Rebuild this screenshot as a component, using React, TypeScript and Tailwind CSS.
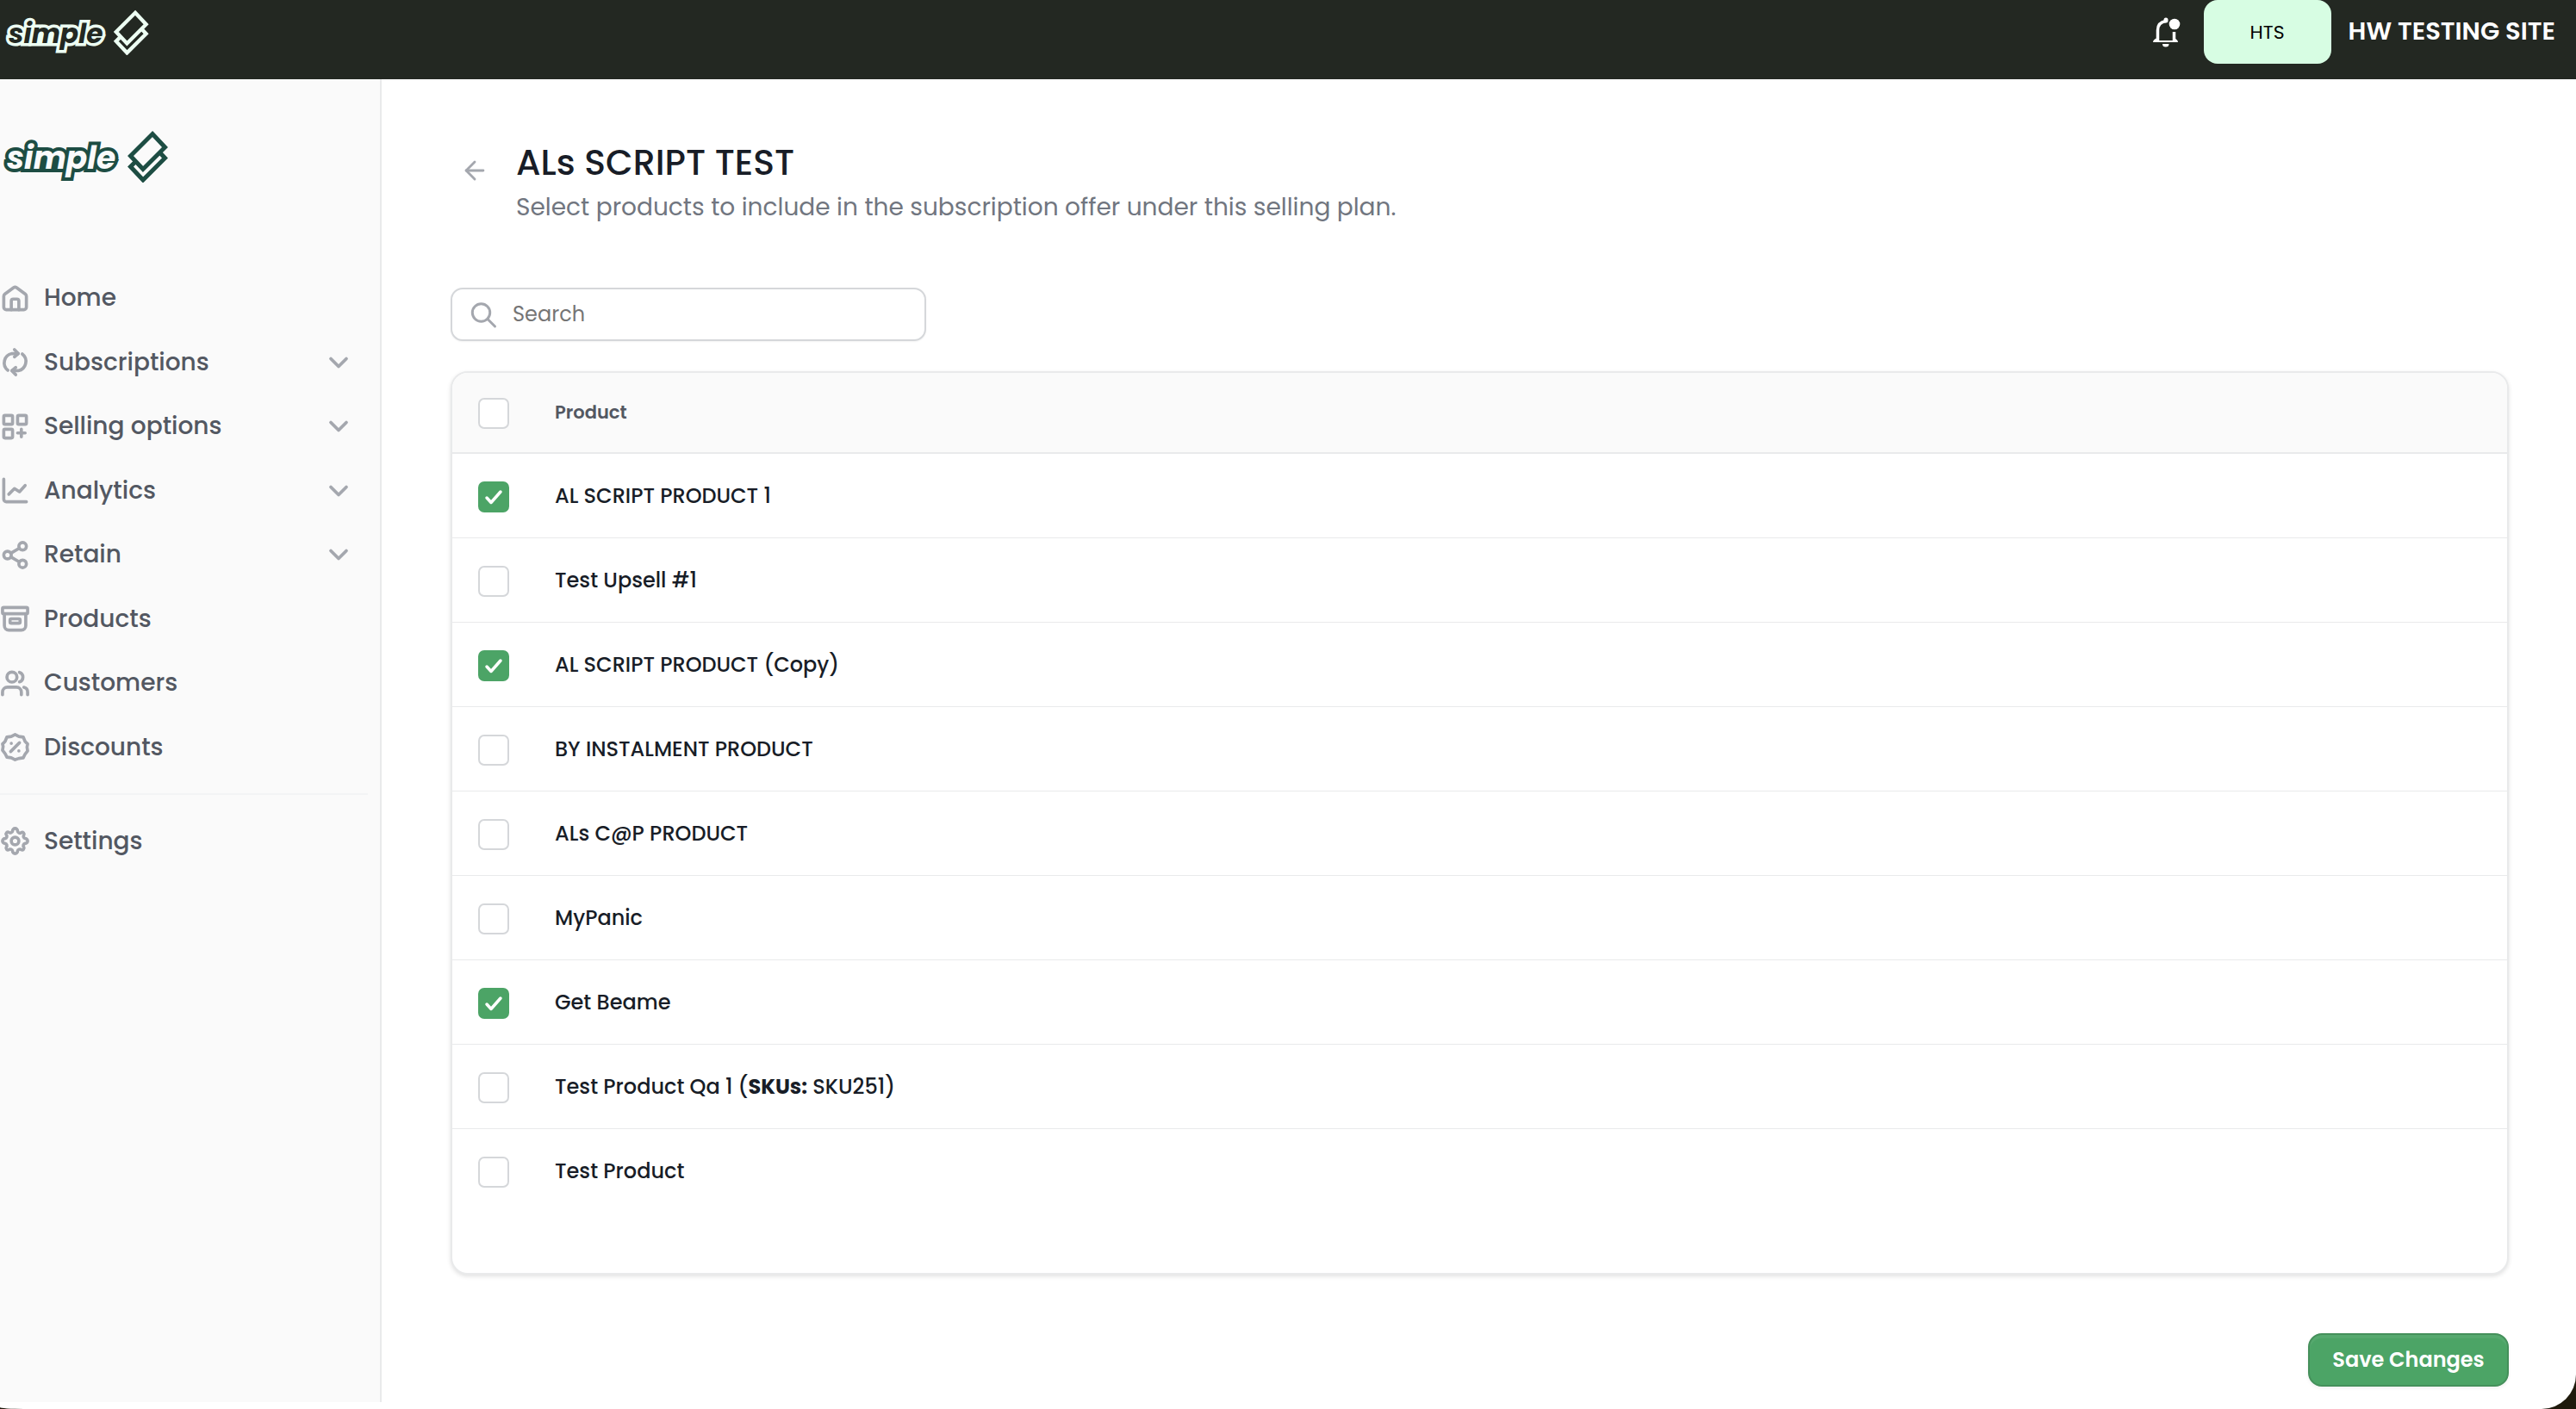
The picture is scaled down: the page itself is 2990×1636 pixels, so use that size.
import { useState } from "react";
import type { ReactNode } from "react";
import { ArrowLeft, ChevronDown } from "lucide-react";

const navItems = [
  {
    label: "Home",
    expandable: false,
    icon: (
      <>
        <path d="M3 10.200a2 2 0 0 1 .800-1.600l7-5.200a2 2 0 0 1 2.400 0l7 5.200a2 2 0 0 1 .800 1.600V19a2 2 0 0 1-2 2H5a2 2 0 0 1-2-2Z" />
        <path d="M9 21v-7a1.500 1.500 0 0 1 1.500-1.500h3A1.500 1.500 0 0 1 15 14v7" />
      </>
    ),
  },
  {
    label: "Subscriptions",
    expandable: true,
    icon: (
      <>
        <path d="M6.300 18.500A7.500 7.500 0 0 1 9.500 5.200h5" />
        <path d="M11.500 2l3 3.200-3 2.600" />
        <path d="M17.700 5.500A7.500 7.500 0 0 1 14.500 18.800h-5" />
        <path d="M12.500 22l-3-3.200 3-2.600" />
      </>
    ),
  },
  {
    label: "Selling options",
    expandable: true,
    icon: (
      <>
        <rect x="3" y="3" width="7" height="7" rx="1" />
        <rect x="14" y="3" width="7" height="7" rx="1" />
        <rect x="3" y="14" width="7" height="7" rx="1" />
        <path d="M17 14v6M14 17h6" />
      </>
    ),
  },
  {
    label: "Analytics",
    expandable: true,
    icon: (
      <>
        <path d="M3 3v16a2 2 0 0 0 2 2h16" />
        <path d="m7 15 4.500-4.500 4 2.500L20 8" />
      </>
    ),
  },
  {
    label: "Retain",
    expandable: true,
    icon: (
      <>
        <circle cx="18" cy="5" r="3" />
        <circle cx="6" cy="12" r="3" />
        <circle cx="18" cy="19" r="3" />
        <path d="m8.600 13.500 6.800 4M15.400 6.500l-6.800 4" />
      </>
    ),
  },
  {
    label: "Products",
    expandable: false,
    icon: (
      <>
        <rect x="2" y="3" width="20" height="5" rx="1" />
        <path d="M3.500 8v9.500A3.500 3.500 0 0 0 7 21h10a3.500 3.500 0 0 0 3.500-3.500V8" />
        <rect x="8" y="12" width="8" height="3.500" rx="1" />
      </>
    ),
  },
  {
    label: "Customers",
    expandable: false,
    icon: (
      <>
        <circle cx="9.500" cy="7" r="4" />
        <path d="M2 21v-2a4 4 0 0 1 4-4h7a4 4 0 0 1 4 4v2" />
        <path d="M15.500 3.200a4 4 0 0 1 0 7.600" />
        <path d="M22 21v-2a4 4 0 0 0-3-3.900" />
      </>
    ),
  },
  {
    label: "Discounts",
    expandable: false,
    icon: (
      <>
        <path d="M12 2l3 1.500 3.500.500 1.500 3.500 2 2-.500 2.500.500 3-2 2.500-1.500 3-3.500.500L12 22l-3-1.500-3.500-.500L4 17 2 14.500l.500-3L2 9.500l2-2L5.500 4 9 3.500Z" />
        <path d="M8.500 15.500l7-7M9 9h.01M15 15h.01" />
      </>
    ),
  },
];

const products = [
  { id: 1, name: "AL SCRIPT PRODUCT 1" },
  { id: 2, name: "Test Upsell #1" },
  { id: 3, name: "AL SCRIPT PRODUCT (Copy)" },
  { id: 4, name: "BY INSTALMENT PRODUCT" },
  { id: 5, name: "ALs C@P PRODUCT" },
  { id: 6, name: "MyPanic" },
  { id: 7, name: "Get Beame" },
  { id: 8, name: "Test Product Qa 1", sku: "SKU251" },
  { id: 9, name: "Test Product" },
];

function Logo({ className, color, fill }: { className: string; color: string; fill: string }) {
  return (
    <svg viewBox="0 0 200 62" className={className} role="img" aria-label="simple">
      <text
        x="8"
        y="46"
        fontSize="36"
        fontWeight="700"
        fontStyle="italic"
        fontFamily="Poppins, sans-serif"
        fill={fill}
        stroke={color}
        strokeWidth="8"
        paintOrder="stroke"
      >
        simple
      </text>
      <g fill={fill} stroke={color} strokeWidth="5">
        <path d="M177 18 191.500 33.500 166 59 151.500 43.500Z" />
        <path d="M177 5.500 191.500 21 166 46.500 151.500 31Z" />
      </g>
    </svg>
  );
}

function NavIcon({ children }: { children: ReactNode }) {
  return (
    <svg
      viewBox="0 0 24 24"
      className="size-[35px] shrink-0 text-[#a4a7ae]"
      fill="none"
      stroke="currentColor"
      strokeWidth="2.500"
      strokeLinecap="round"
      strokeLinejoin="round"
    >
      {children}
    </svg>
  );
}

function Checkbox({ label, checked, onChange }: { label: string; checked: boolean; onChange: () => void }) {
  return (
    <span className="grid size-9">
      <input
        type="checkbox"
        aria-label={label}
        checked={checked}
        onChange={onChange}
        className="col-start-1 row-start-1 size-9 appearance-none rounded-[7px] border-2 border-[#d5d7da] bg-white checked:border-[#4ca466] checked:bg-[#4ca466]"
      />
      {checked && (
        <svg viewBox="0 0 36 36" className="pointer-events-none col-start-1 row-start-1 size-9" fill="none">
          <path d="M10 19l5 5.500L26 12" stroke="white" strokeWidth="3.500" strokeLinecap="round" strokeLinejoin="round" />
        </svg>
      )}
    </span>
  );
}

export default function App() {
  const [selected, setSelected] = useState<number[]>([1, 3, 7]);
  const [searchTerm, setSearchTerm] = useState("");

  const filteredProducts = products.filter((product) =>
    product.name.toLowerCase().includes(searchTerm.toLowerCase())
  );
  const allSelected = selected.length === products.length;

  const toggle = (id: number) => {
    setSelected(selected.includes(id) ? selected.filter((s) => s !== id) : [...selected, id]);
  };

  return (
    <div className="min-h-screen bg-[#1f1a0c] font-['Poppins','Inter',sans-serif]">
      <div className="flex min-h-screen flex-col overflow-hidden rounded-br-[40px] rounded-bl-[28px_2px] bg-white">
        <header className="flex h-[92px] items-start justify-between bg-[#232822] pr-6">
          <Logo className="mt-2.5 ml-[3px] h-[54px] w-[174px]" color="#edfff3" fill="#232822" />
          <div className="flex h-[74px] items-center">
            <button type="button" aria-label="Notifications" className="mr-6 text-white">
              <svg viewBox="0 0 40 40" className="size-10" fill="none" stroke="currentColor" strokeWidth="3.500">
                <path d="M20 7.500C14 8.500 10.500 12 10.500 18v12M29.500 20v10" />
                <path d="M20 6v1" strokeWidth="5" strokeLinecap="round" />
                <path d="M5 32c0-2 2-4 4-4.500V30h21v-2.500c2 .500 4 2.500 4 4.500Z" fill="currentColor" stroke="none" />
                <circle cx="30" cy="11" r="6.300" fill="currentColor" stroke="none" />
                <path d="M16 34h7.500a3.700 3.500 0 0 1-7.500 0Z" fill="currentColor" stroke="none" />
              </svg>
            </button>
            <button type="button" className="h-full w-[148px] rounded-2xl bg-[#d7fde3] text-[22px] text-black">
              HTS
            </button>
            <span className="ml-5 text-[29px] font-semibold text-white">HW TESTING SITE</span>
          </div>
        </header>

        <div className="flex grow">
          <aside className="mb-2 w-[443px] shrink-0 border-r-2 border-[#e9eaeb] bg-[#fafafa]">
            <Logo className="mt-[58px] h-[62px] w-[200px]" color="#1d4d43" fill="#fafafa" />
            <nav className="mt-[97px] pr-3.5">
              <ul className="grid h-[614px] auto-rows-fr border-b-2 border-[#f3f4f5] pb-4">
                {navItems.map((item) => (
                  <li key={item.label}>
                    <a href="#" className="flex h-full items-center pr-4 text-[28px] font-medium text-[#535862]">
                      <NavIcon>{item.icon}</NavIcon>
                      <span className="ml-4 grow">{item.label}</span>
                      {item.expandable && <ChevronDown className="size-9 text-[#a4a7ae]" strokeWidth={2.5} />}
                    </a>
                  </li>
                ))}
              </ul>
              <a href="#" className="mt-4 flex h-[75px] items-center text-[28px] font-medium text-[#535862]">
                <NavIcon>
                  <circle cx="12" cy="12" r="3" />
                  <path d="M12 2a2 2 0 0 1 2 2 1.800 1.800 0 0 0 3 1.200 1.500 1.500 0 0 1 2 2A1.800 1.800 0 0 0 20 10a2 2 0 0 1 0 4 1.800 1.800 0 0 0-1 3 1.500 1.500 0 0 1-2 2 1.800 1.800 0 0 0-3 1 2 2 0 0 1-4 0 1.800 1.800 0 0 0-3-1 1.500 1.500 0 0 1-2-2 1.800 1.800 0 0 0-1-3 2 2 0 0 1 0-4 1.800 1.800 0 0 0 1-3 1.500 1.500 0 0 1 2-2 1.800 1.800 0 0 0 3-1 2 2 0 0 1 2-2Z" />
                </NavIcon>
                <span className="ml-4">Settings</span>
              </a>
            </nav>
          </aside>

          <main className="grow pt-[69px] pr-[78px] pb-6 pl-20">
            <div className="flex">
              <a href="#" aria-label="Back" className="mt-5 mr-[31px] ml-[11px] h-[34px] text-[#a4a7ae]">
                <ArrowLeft className="size-[34px]" />
              </a>
              <div>
                <h1 className="text-[41px] leading-[56px] font-medium text-[#181d27]">ALs SCRIPT TEST</h1>
                <p className="text-[28px] leading-[48px] text-[#717680]">
                  Select products to include in the subscription offer under this selling plan.
                </p>
              </div>
            </div>

            <label className="mt-[69px] flex h-[62px] w-[552px] items-center rounded-[14px] border-2 border-[#d5d7da] bg-white px-[18px] shadow-xs">
              <svg
                viewBox="0 0 36 36"
                className="size-9 shrink-0 text-[#a4a7ae]"
                fill="none"
                stroke="currentColor"
                strokeWidth="3"
                strokeLinecap="round"
              >
                <circle cx="15.500" cy="16" r="10.200" />
                <path d="M23 23.500l8.500 8.500" />
              </svg>
              <input
                type="text"
                aria-label="Search"
                placeholder="Search"
                value={searchTerm}
                onChange={(e) => setSearchTerm(e.target.value)}
                className="ml-4 w-full text-2xl outline-none placeholder:text-[#757575]"
              />
            </label>

            <div className="mt-[35px] overflow-hidden rounded-[20px] border-2 border-[#e9eaeb] bg-white pb-[70px] shadow-[0_2px_5px_rgba(0,0,0,0.12)]">
              <table className="w-full text-left text-[#181d27]">
                <thead>
                  <tr className="h-[93px] border-b-2 border-[#e9eaeb] bg-[#fafafa]">
                    <th className="w-[119px] pt-0.5 pl-[30px]">
                      <Checkbox
                        label="Select all products"
                        checked={allSelected}
                        onChange={() => setSelected(allSelected ? [] : products.map((p) => p.id))}
                      />
                    </th>
                    <th className="text-[21px] font-semibold text-[#535862]">Product</th>
                  </tr>
                </thead>
                <tbody>
                  {filteredProducts.map((product) => (
                    <tr key={product.id} className="h-[98px] border-b border-[#e9eaeb] last:border-b-0">
                      <td className="pt-1 pl-[30px]">
                        <Checkbox
                          label={product.name}
                          checked={selected.includes(product.id)}
                          onChange={() => toggle(product.id)}
                        />
                      </td>
                      <td className="pt-0.5 text-2xl font-medium">
                        {product.name}
                        {product.sku && (
                          <>
                            {" "}
                            (<strong className="font-bold">SKUs:</strong> {product.sku})
                          </>
                        )}
                      </td>
                    </tr>
                  ))}
                </tbody>
              </table>
            </div>

            <div className="mt-[68px] flex justify-end">
              <button
                type="button"
                className="h-[62px] w-[233px] rounded-2xl border-2 border-[#45905b] bg-[#4ca466] text-2xl font-semibold text-white shadow-[inset_0_4px_1px_rgba(255,255,255,0.06),0_2px_4px_rgba(0,0,0,0.06)]"
              >
                Save Changes
              </button>
            </div>
          </main>
        </div>
      </div>
    </div>
  );
}
